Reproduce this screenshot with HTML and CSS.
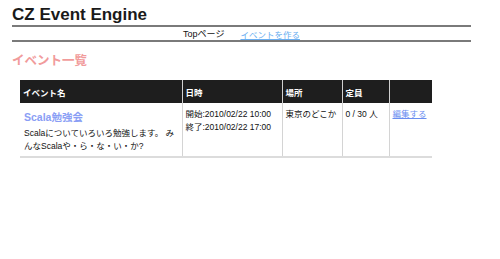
FILE: index.html
```html
<!DOCTYPE html>
<html lang="ja">
<head>
<meta charset="utf-8">
<title>CZ Event Engine</title>
<link rel="stylesheet" href="styles.css">
</head>
<body>
<div class="page">
  <h1 class="title">CZ Event Engine</h1>
  <nav class="nav">
    <span class="nav-item">Topページ</span>
    <a class="nav-link" href="#">イベントを作る</a>
  </nav>
  <h2 class="heading">イベント一覧</h2>
  <table class="events">
    <colgroup>
      <col class="c1"><col class="c2"><col class="c3"><col class="c4"><col class="c5">
    </colgroup>
    <thead>
      <tr>
        <th>イベント名</th>
        <th>日時</th>
        <th>場所</th>
        <th>定員</th>
        <th></th>
      </tr>
    </thead>
    <tbody>
      <tr>
        <td>
          <a class="event-name" href="#">Scala勉強会</a>
          <p class="desc">Scalaについていろいろ勉強します。 みんなScalaや・ら・な・い・か?</p>
        </td>
        <td>開始:2010/02/22 10:00<br>終了:2010/02/22 17:00</td>
        <td>東京のどこか</td>
        <td>0 / 30 人</td>
        <td><a class="edit" href="#">編集する</a></td>
      </tr>
    </tbody>
  </table>
</div>
</body>
</html>
```
FILE: styles.css
```css
html, body {
  margin: 0;
  padding: 0;
  background: #fff;
}
body {
  font-family: "Liberation Sans", Arial, "Noto Sans CJK JP", sans-serif;
  color: #111;
}
.page {
  padding: 5px 29px 0 12px;
}
.title {
  margin: 0;
  font-size: 17px;
  line-height: 20px;
  font-weight: bold;
  color: #1a1a1a;
}
.nav {
  margin-top: 0;
  border-top: 2px solid #7a7a7a;
  border-bottom: 2px solid #7a7a7a;
  height: 13px;
  display: flex;
  justify-content: center;
  align-items: center;
  gap: 16px;
  font-size: 8.5px;
}
.nav-item {
  font-size: 9px;
}
.nav-link {
  color: #6aaef0;
}
.heading {
  margin: 12px 0 0 0;
  font-size: 12.5px;
  line-height: 15px;
  font-weight: bold;
  color: #f19b9b;
}
.events {
  margin: 11px 0 0 8px;
  border-collapse: collapse;
  width: 412px;
  table-layout: fixed;
  font-size: 8.5px;
}
.c1 { width: 162px; }
.c2 { width: 100px; }
.c3 { width: 60px; }
.c4 { width: 47px; }
.c5 { width: 43px; }
.events th {
  background: #1e1e1e;
  color: #fff;
  text-align: left;
  font-weight: bold;
  height: 23px;
  padding: 0 3px;
  border-left: 1px solid #d0d0d0;
  font-size: 8.5px;
}
.events th:first-child {
  border-left: none;
}
.events td {
  vertical-align: top;
  padding: 5px 3px 0 3px;
  height: 48px;
  border-left: 1px solid #d4d4d4;
  border-bottom: 2px solid #dcdcdc;
  line-height: 13px;
}
.events td:first-child {
  border-left: none;
  padding-left: 4px;
}
.event-name {
  display: block;
  font-size: 10.5px;
  font-weight: bold;
  color: #8a9ef5;
  text-decoration: none;
  line-height: 18px;
}
.desc {
  margin: 1px 0 0 0;
  line-height: 13px;
}
.edit {
  color: #6a8ef0;
}
```
